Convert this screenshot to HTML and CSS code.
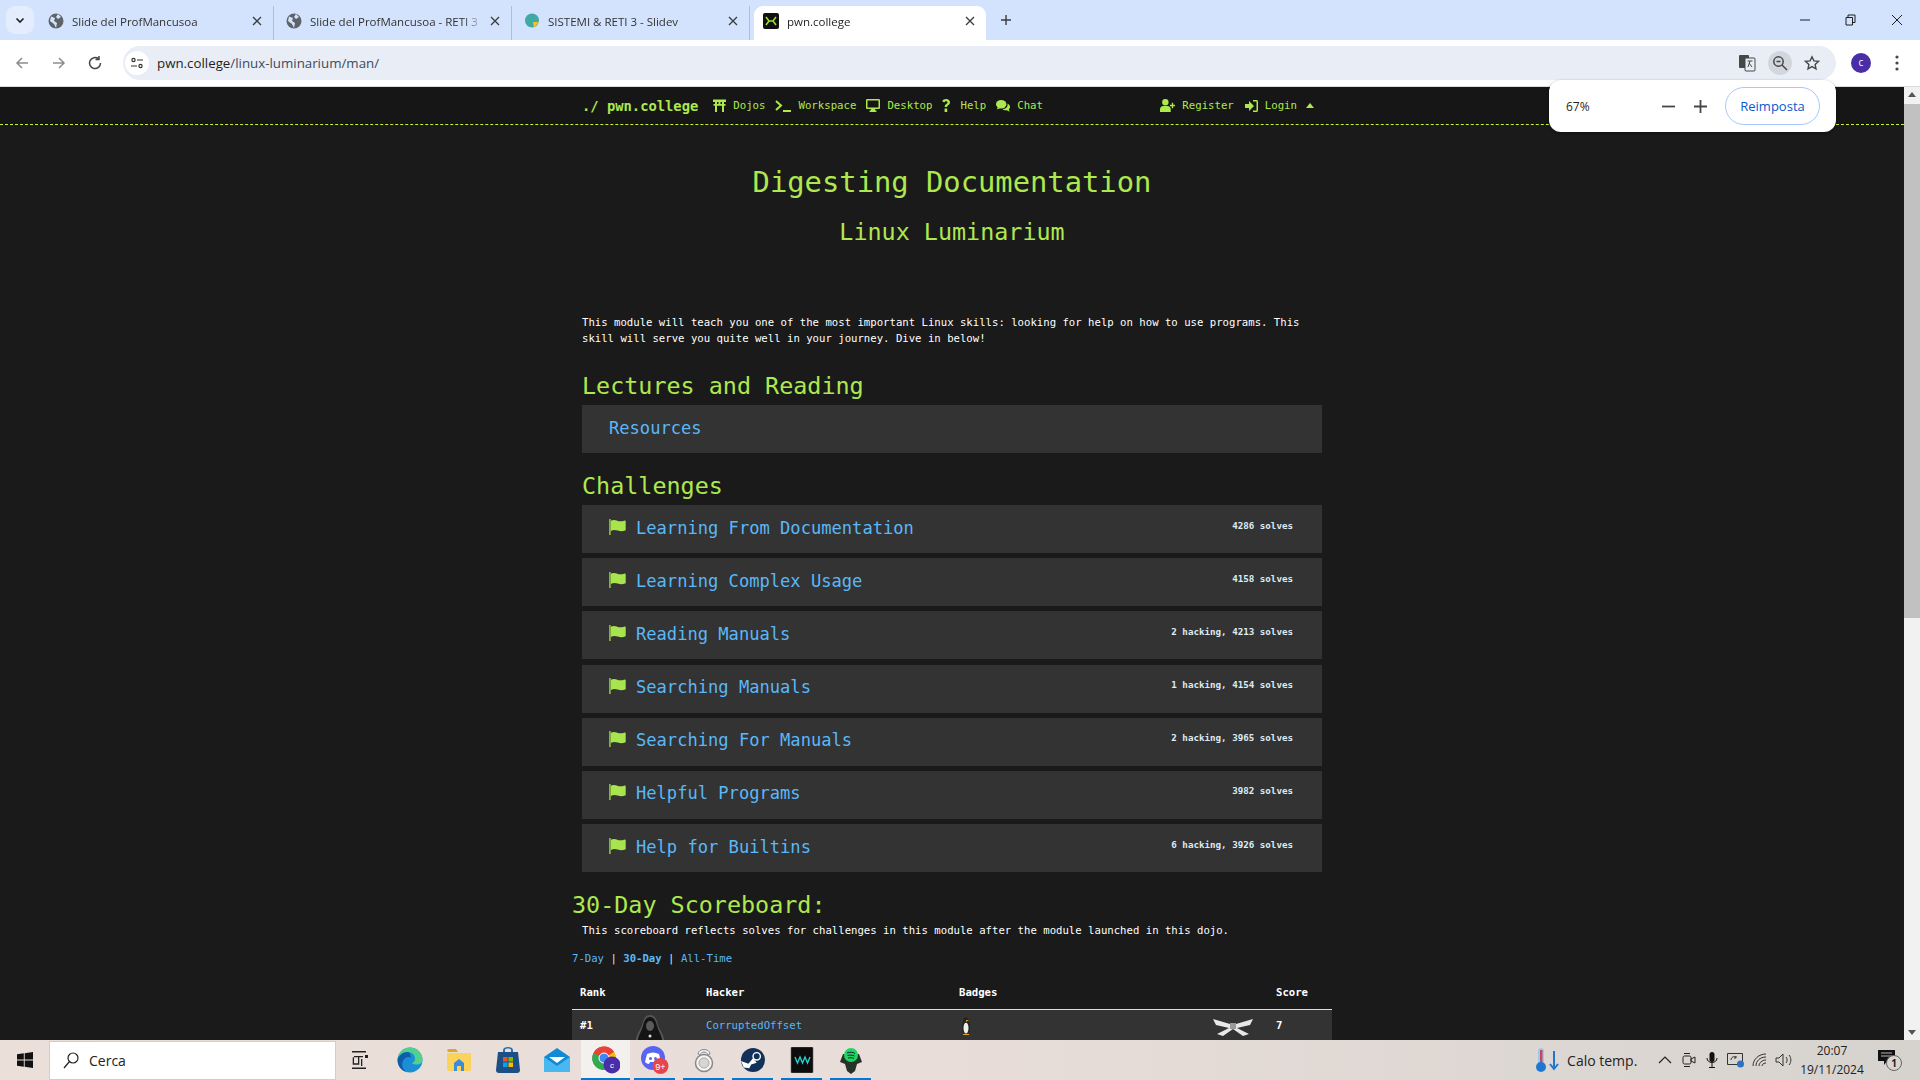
FILE: index.html
```html
<!DOCTYPE html>
<html lang="en">
<head>
    <meta charset="UTF-8">
    <title>pwn.college</title>
    <link rel="stylesheet" href="styles.css">
</head>
<body>
    <svg class="defs" width="0" height="0">
        <symbol id="flag" viewBox="0 0 17 16"><path d="M0 0h1.800v16H0z" fill="#7fb33a"/><path d="M1.800 1.800c2.500-1.400 4.500-.8 6.500 0s4.500.8 7.400-.3c.6 0 1 .2 1 .7v9c-3 1.600-5.500 1.300-8 .4s-4.500-.8-6.900.4z" fill="#a8e44d"/></symbol>
        <symbol id="globe" viewBox="0 0 16 16"><circle cx="8" cy="8" r="7.500" fill="#5f6368"/><path d="M3 3.500 7 5 6 8l3 2-1 5-2-4-4-3zM10 1l3 3-3 2-2-2z" fill="#d3e3fd"/></symbol>
        <symbol id="tabx" viewBox="0 0 10 10"><path d="M1 1l8 8M9 1 1 9" stroke="#3c3c3c" stroke-width="1.300"/></symbol>
    </svg>

    <!-- browser tabs -->
    <div class="tabstrip">
        <div class="tab-search"><svg width="10" height="10" viewBox="0 0 10 10"><path d="M1.500 3.500 5 7l3.500-3.500" fill="none" stroke="#1f1f1f" stroke-width="1.600"/></svg></div>
        <div class="tab">
            <svg class="favicon" width="16" height="16"><use href="#globe"/></svg>
            <span class="tab-title">Slide del ProfMancusoa</span>
            <svg class="tab-x" width="10" height="10"><use href="#tabx"/></svg>
        </div>
        <div class="tab">
            <svg class="favicon" width="16" height="16"><use href="#globe"/></svg>
            <span class="tab-title">Slide del ProfMancusoa - RETI 3</span>
            <svg class="tab-x" width="10" height="10"><use href="#tabx"/></svg>
        </div>
        <div class="tab">
            <svg class="favicon" width="16" height="16" viewBox="0 0 16 16"><circle cx="8" cy="7.500" r="7" fill="#3fa9a4"/><path d="M9 9h6l-5 6z" fill="#f2c230"/></svg>
            <span class="tab-title">SISTEMI &amp; RETI 3 - Slidev</span>
            <svg class="tab-x" width="10" height="10"><use href="#tabx"/></svg>
        </div>
        <div class="tab active">
            <svg class="favicon" width="16" height="16" viewBox="0 0 16 16"><rect width="16" height="16" rx="2" fill="#111"/><path d="M3 4l3 4-3 4M13 4l-3 4 3 4M6 8h4" fill="none" stroke="#a6e22e" stroke-width="1.500"/></svg>
            <span class="tab-title">pwn.college</span>
            <svg class="tab-x" width="10" height="10"><use href="#tabx"/></svg>
        </div>
        <svg class="tab-new" width="12" height="12" viewBox="0 0 12 12"><path d="M6 1v10M1 6h10" stroke="#3c3c3c" stroke-width="1.400"/></svg>
        <div class="win-controls">
            <svg width="10" height="10" viewBox="0 0 10 10"><path d="M0 5h10" stroke="#1f1f1f"/></svg>
            <svg width="11" height="12" viewBox="0 0 11 12"><path d="M1 3.500h6.500V11H1zM3 3.500V1h7v7.500H7.500" fill="none" stroke="#1f1f1f"/></svg>
            <svg width="12" height="12" viewBox="0 0 12 12"><path d="M1 1l10 10M11 1 1 11" stroke="#1f1f1f"/></svg>
        </div>
    </div>

    <!-- address bar -->
    <div class="toolbar">
        <svg class="tool-btn" width="16" height="16" viewBox="0 0 16 16"><path d="M14 8H3M8 3 3 8l5 5" fill="none" stroke="#8a8d91" stroke-width="1.500"/></svg>
        <svg class="tool-btn" width="16" height="16" viewBox="0 0 16 16"><path d="M2 8h11M8 3l5 5-5 5" fill="none" stroke="#8a8d91" stroke-width="1.500"/></svg>
        <svg class="tool-btn" width="16" height="16" viewBox="0 0 16 16"><path d="M13.500 8A5.500 5.500 0 1 1 11.500 3.800M12 1v3.500H8.500" fill="none" stroke="#474747" stroke-width="1.500"/></svg>
        <div class="omnibox">
            <div class="site-info"><svg width="14" height="14" viewBox="0 0 14 14"><g fill="none" stroke="#333" stroke-width="1.200"><circle cx="3.500" cy="4" r="1.600"/><path d="M7 4h6M1 10h6"/><circle cx="10.500" cy="10" r="1.600"/></g></svg></div>
            <div class="url">pwn.college<span class="url-path">/linux-luminarium/man/</span></div>
            <div class="omni-icons">
                <svg width="18" height="18" viewBox="0 0 18 18"><rect x="1" y="1" width="10" height="13" rx="1" fill="#474747"/><rect x="7" y="4" width="10" height="13" rx="1" fill="#e9eef6" stroke="#474747"/><path d="M9.500 7h5M12 7l-2 6M11 9l3 4" stroke="#474747" fill="none"/></svg>
                <span class="zoom-chip"><svg width="16" height="16" viewBox="0 0 16 16"><circle cx="6.500" cy="6.500" r="4.700" fill="none" stroke="#474747" stroke-width="1.500"/><path d="M10 10l5 5M4.500 6.500h4" stroke="#474747" stroke-width="1.500"/></svg></span>
                <svg width="16" height="16" viewBox="0 0 16 16"><path d="m8 1.800 1.900 4.100 4.500.5-3.300 3 .9 4.400L8 11.600l-4 2.200.9-4.400-3.300-3 4.500-.5z" fill="none" stroke="#474747" stroke-width="1.400"/></svg>
            </div>
        </div>
        <div class="avatar">c</div>
        <svg class="kebab" width="4" height="16" viewBox="0 0 4 16"><circle cx="2" cy="2" r="1.600" fill="#474747"/><circle cx="2" cy="8" r="1.600" fill="#474747"/><circle cx="2" cy="14" r="1.600" fill="#474747"/></svg>
    </div>

    <div class="viewport">
        <div class="page">
            <nav class="navbar">
                <div class="nav-inner">
                    <a class="brand">./ pwn.college</a>
                    <a class="nav-link"><svg width="13" height="13" viewBox="0 0 13 13"><path d="M0 .5h13v2.500H11V5h1.500v1.800H11V13H9V6.800H4V13H2V6.800H.5V5H2V3H0zM4 3v2h1.500V3zm3.500 0v2H9V3z" fill="currentColor"/></svg>Dojos</a>
                    <a class="nav-link"><svg width="16" height="12" viewBox="0 0 16 12"><path d="M1 1l5 4.500L1 10M8 11h8" fill="none" stroke="currentColor" stroke-width="2"/></svg>Workspace</a>
                    <a class="nav-link"><svg width="14" height="13" viewBox="0 0 14 13"><path d="M1.300 0h11.400C13.400 0 14 .6 14 1.300v7.400c0 .7-.6 1.300-1.300 1.300H9l.4 1.500h1V13H3.600v-1.500h1L5 10H1.300C.6 10 0 9.400 0 8.700V1.300C0 .6.600 0 1.300 0zm.2 1.500v7h11v-7z" fill="currentColor"/></svg>Desktop</a>
                    <a class="nav-link"><svg width="11" height="13" viewBox="0 0 11 13"><path d="M4.200 0C6.400 0 8 1.300 8 3.300c0 1.700-1 2.400-2 3.100-.7.500-.9.800-.9 1.600H2.700c0-1.600.5-2.300 1.600-3.100.8-.5 1.200-.9 1.200-1.500 0-.8-.6-1.200-1.400-1.200-.9 0-1.400.5-1.800 1.200L.2 2.200C.9.800 2.300 0 4.200 0zM2.600 9.500h2.600V13H2.600z" fill="currentColor"/></svg>Help</a>
                    <a class="nav-link"><svg width="14" height="12" viewBox="0 0 14 12"><ellipse cx="5.200" cy="4.300" rx="5.200" ry="4.200" fill="currentColor"/><path d="M2 7 .8 9.500 4.500 8z" fill="currentColor"/><path d="M11.500 3.500C13 4.300 14 5.500 14 7c0 1-.5 1.800-1.200 2.400l.9 2.300-3-1.500C9 10.500 7.500 10 6.500 9.200c3 0 5.600-2 5-5.700z" fill="currentColor"/></svg>Chat</a>
                    <div class="nav-right">
                        <a class="nav-link nav-register"><svg width="15" height="13" viewBox="0 0 14 12"><circle cx="5" cy="3" r="3" fill="currentColor"/><path d="M0 12V9.500C0 7.800 1.300 6.500 3 6.500h4c1.700 0 3 1.300 3 3V12zM11 3.500v1.800H9.200v1.400H11v1.800h1.300V6.700H14V5.300h-1.700V3.500z" fill="currentColor"/></svg>Register</a>
                        <a class="nav-link"><svg width="13" height="12" viewBox="0 0 13 12"><path d="M0 4h4V1l5 5-5 5V8H0zM8 0h3.500C12.300 0 13 .7 13 1.500v9c0 .8-.7 1.500-1.500 1.500H8v-1.500h3.500v-9H8z" fill="currentColor"/></svg>Login</a>
                        <svg class="caret" width="8" height="5" viewBox="0 0 8 5"><path d="M0 5 4 0l4 5z" fill="currentColor"/></svg>
                    </div>
                </div>
            </nav>

            <main class="content">
                <h1 class="page-title">Digesting Documentation</h1>
                <h2 class="page-sub">Linux Luminarium</h2>
                <p class="intro">This module will teach you one of the most important Linux skills: looking for help on how to use programs. This skill will serve you quite well in your journey. Dive in below!</p>

                <h3 class="section">Lectures and Reading</h3>
                <div class="row"><a class="row-title">Resources</a></div>

                <h3 class="section section-gap">Challenges</h3>
                <div class="row-list">
                    <div class="row">
                        <svg class="flag" width="17" height="16"><use href="#flag"/></svg>
                        <a class="row-title">Learning From Documentation</a><span class="solves">4286 solves</span>
                    </div>
                    <div class="row">
                        <svg class="flag" width="17" height="16"><use href="#flag"/></svg>
                        <a class="row-title">Learning Complex Usage</a><span class="solves">4158 solves</span>
                    </div>
                    <div class="row">
                        <svg class="flag" width="17" height="16"><use href="#flag"/></svg>
                        <a class="row-title">Reading Manuals</a><span class="solves">2 hacking, 4213 solves</span>
                    </div>
                    <div class="row">
                        <svg class="flag" width="17" height="16"><use href="#flag"/></svg>
                        <a class="row-title">Searching Manuals</a><span class="solves">1 hacking, 4154 solves</span>
                    </div>
                    <div class="row">
                        <svg class="flag" width="17" height="16"><use href="#flag"/></svg>
                        <a class="row-title">Searching For Manuals</a><span class="solves">2 hacking, 3965 solves</span>
                    </div>
                    <div class="row">
                        <svg class="flag" width="17" height="16"><use href="#flag"/></svg>
                        <a class="row-title">Helpful Programs</a><span class="solves">3982 solves</span>
                    </div>
                    <div class="row">
                        <svg class="flag" width="17" height="16"><use href="#flag"/></svg>
                        <a class="row-title">Help for Builtins</a><span class="solves">6 hacking, 3926 solves</span>
                    </div>
                </div>

                <div class="scoreboard">
                    <h3 class="section board-title">30-Day Scoreboard:</h3>
                    <p class="board-note">This scoreboard reflects solves for challenges in this module after the module launched in this dojo.</p>
                    <div class="board-tabs"><a>7-Day</a> | <a class="current">30-Day</a> | <a>All-Time</a></div>
                    <div class="board-row board-head">
                        <span>Rank</span><span></span><span>Hacker</span><span>Badges</span><span></span><span>Score</span>
                    </div>
                    <div class="board-row board-entry">
                        <span>#1</span>
                        <svg class="board-avatar" width="30" height="32" viewBox="0 0 30 30"><path d="M15 1c5 0 7 5 8 10 1 4 5 8 6 14v5H1v-5c1-6 5-10 6-14 1-5 3-10 8-10z" fill="#555"/><path d="M15 3c4 0 6 4 7 9 1 4 4 8 5 13v5H3v-5c1-5 4-9 5-13 1-5 3-9 7-9z" fill="#141414"/><ellipse cx="15" cy="12" rx="4" ry="5" fill="#5a5a5a"/><circle cx="15" cy="22" r="1.500" fill="#ddd"/></svg>
                        <a class="hacker">CorruptedOffset</a>
                        <svg class="penguin" width="10" height="18" viewBox="0 0 10 18"><ellipse cx="5" cy="10" rx="4" ry="7" fill="#222"/><ellipse cx="5" cy="11" rx="2.500" ry="5.500" fill="#eee"/><circle cx="5" cy="3" r="2.500" fill="#222"/><path d="M5 3h3L5 5zM2 17h6v1H2z" fill="#e8a020"/></svg>
                        <svg class="belt" width="42" height="20" viewBox="0 0 42 20"><path d="M1 3 18 8 24 8 41 3 38 9 25 12 37 18 31 20 21 13 11 20 5 18 17 12 4 9z" fill="#e8e8e8"/><path d="M18 7h6v6h-6z" fill="#999"/></svg>
                        <span>7</span>
                    </div>
                </div>
            </main>
        </div>

        <div class="scrollbar">
            <svg width="8" height="5" viewBox="0 0 8 5"><path d="M0 5 4 0l4 5z" fill="#555"/></svg>
            <div class="scroll-thumb"></div>
            <svg class="scroll-down" width="8" height="5" viewBox="0 0 8 5"><path d="M0 0h8L4 5z" fill="#555"/></svg>
        </div>

        <!-- chrome zoom bubble -->
        <div class="zoom-bubble">
            <span class="zoom-level">67%</span>
            <svg class="zoom-minus" width="13" height="13" viewBox="0 0 13 13"><path d="M0 6.500h13" stroke="#474747" stroke-width="1.800"/></svg>
            <svg class="zoom-plus" width="13" height="13" viewBox="0 0 13 13"><path d="M0 6.500h13M6.500 0v13" stroke="#474747" stroke-width="1.800"/></svg>
            <button class="zoom-reset">Reimposta</button>
        </div>
    </div>

    <!-- windows taskbar -->
    <div class="taskbar">
        <div class="start"><svg width="16" height="16" viewBox="0 0 16 16"><path d="M0 2.300 6.800 1.300v6.200H0zM7.700 1.200 16 0v7.500H7.700zM0 8.400h6.800v6.300L0 13.700zM7.700 8.400H16V16l-8.300-1.200z" fill="#111"/></svg></div>
        <div class="search"><svg width="18" height="18" viewBox="0 0 18 18"><circle cx="11" cy="7" r="5" fill="none" stroke="#222" stroke-width="1.200"/><path d="M7.500 10.500 2 17" stroke="#222" stroke-width="1.200"/></svg><span>Cerca</span></div>
        <div class="task-icons">
            <div class="task task-view"><svg width="18" height="18" viewBox="0 0 18 18"><path d="M2 0h14v1.500H2zM15 4h3v3h-3zM4 5h9v1.300H4v6H8v-6h1.300v7.500H2.700V6.300H4zM11 8h1.300v7H11zM2 16.500h14V18H2z" fill="#222"/></svg></div>
            <div class="task"><svg width="26" height="26" viewBox="0 0 26 26"><circle cx="13" cy="13" r="12.500" fill="#1b8ed6"/><path d="M13 .5C20 .5 25.500 6 25.500 13c0 3-2.500 4.500-6 4.500-2 0-3.500-.5-4.500-1.500 2-1 3-2.500 3-4.500C18 8 15 5 11 5 6 5 2 8 .6 11.500 2 5 7 .5 13 .5z" fill="#52d18e"/><path d="M11 5C6 5 1.500 8.500.6 13c0 6 4 11 9.500 12.200C6 23 4.500 19 5.500 15c.8-3 3.300-5 6-5 1 0 2 .3 2.500 .7C13.500 7.500 12.500 5.500 11 5z" fill="#0f5da8"/></svg></div>
            <div class="task"><svg width="24" height="22" viewBox="0 0 24 22"><path d="M0 2c0-1 1-2 2-2h7l2 3H2z" fill="#e0a526"/><path d="M0 4h24v16c0 1-1 2-2 2H2c-1 0-2-1-2-2z" fill="#fbd25a"/><path d="M7 22v-8l5-4 5 4v8z" fill="#3a8dde"/><path d="M10 22v-5h4v5z" fill="#fbd25a"/></svg></div>
            <div class="task"><svg width="24" height="26" viewBox="0 0 24 26"><path d="M7 6V3c0-4 10-4 10 0v3h-2V3c0-2-6-2-6 0v3z" fill="#2a6fb0"/><path d="M2 5h20l2 18c0 2-1 3-3 3H3c-2 0-3-1-3-3z" fill="#1d4f87"/><path d="M7 10h4.500v4.500H7z" fill="#f25022"/><path d="M12.500 10H17v4.500h-4.500z" fill="#7fba00"/><path d="M7 15.500h4.500V20H7z" fill="#00a4ef"/><path d="M12.500 15.500H17V20h-4.500z" fill="#ffb900"/></svg></div>
            <div class="task"><svg width="26" height="24" viewBox="0 0 26 24"><path d="M13 0 26 9v15H0V9z" fill="#0f8ad6"/><path d="M0 9l13 9 13-9v15H0z" fill="#49b7f0"/><path d="M5 9h16l-8 6z" fill="#fff"/></svg></div>
            <div class="task current">
                <svg width="28" height="28" viewBox="0 0 28 28"><circle cx="12" cy="12" r="11.500" fill="#ea4335"/><path d="M12 12 22 6a11.500 11.500 0 0 1-4 16z" fill="#fbbc04"/><path d="M12 12l6 10A11.500 11.500 0 0 1 1.500 7z" fill="#34a853"/><path d="M12 .5A11.500 11.500 0 0 1 22 6H12a6 6 0 0 0-5.200 3L1.500 7A11.500 11.500 0 0 1 12 .5z" fill="#ea4335"/><circle cx="12" cy="12" r="5" fill="#4285f4" stroke="#fff"/><circle cx="20" cy="19" r="8.500" fill="#4a2ea8"/><text x="20" y="22" font-size="8" fill="#fff" text-anchor="middle" font-family="Liberation Sans">c</text></svg>
            </div>
            <div class="task running"><svg width="28" height="28" viewBox="0 0 28 28"><circle cx="12" cy="12" r="12" fill="#5865f2"/><path d="M6 8c4-2 8-2 12 0l2 8c-1 1-3 2-4 2l-1-2H9l-1 2c-1 0-3-1-4-2z" fill="#fff"/><circle cx="9.500" cy="12.500" r="1.500" fill="#5865f2"/><circle cx="14.500" cy="12.500" r="1.500" fill="#5865f2"/><circle cx="19.500" cy="20" r="8" fill="#e8444a"/><text x="19.500" y="23.500" font-size="9" fill="#fff" text-anchor="middle" font-family="Liberation Sans">9+</text></svg></div>
            <div class="task running"><svg width="20" height="26" viewBox="0 0 20 26"><circle cx="10" cy="16" r="8.500" fill="#f3f3f3" stroke="#888" stroke-width="1.500"/><circle cx="10" cy="16" r="5" fill="#d9d5d0" stroke="#aaa"/><path d="M4 7C4 1 16 1 16 7l-2 1C13 4 7 4 6 8z" fill="#f3f3f3" stroke="#888"/></svg></div>
            <div class="task running"><svg width="24" height="26" viewBox="0 0 26 26"><circle cx="13" cy="13" r="13" fill="#12325a"/><circle cx="17" cy="9" r="4" fill="none" stroke="#fff" stroke-width="1.500"/><path d="M0 14l8 3 5-6 4 5-6 2-2 4-6-1z" fill="#fff"/></svg></div>
            <div class="task running"><svg width="24" height="26" viewBox="0 0 24 26"><rect x="1" y="0" width="22" height="26" rx="1" fill="#0c0c0c" stroke="#666" stroke-width=".6"/><path d="M5 10l2.500 6L10 10l2.500 6L15 10l2.500 6L20 10" fill="none" stroke="#27d0d0" stroke-width="1.400"/></svg></div>
            <div class="task running"><svg width="22" height="28" viewBox="0 0 22 28"><path d="M3 8h16l3 8-5 2-2 7-4 3-4-3-2-7-5-2z" fill="#26332b"/><circle cx="11" cy="9" r="7" fill="#1ed760"/><path d="M7 7c3-1 6-1 8 .5M7.500 9.500c2.500-.7 5-.5 7 .5M8 12c2-.5 4-.4 6 .5" fill="none" stroke="#123" stroke-width="1"/></svg></div>
        </div>
        <div class="tray">
            <svg class="temp" width="26" height="26" viewBox="0 0 26 26"><rect x="3" y="1" width="6" height="18" rx="3" fill="#9cc7ee"/><rect x="5" y="3" width="2.500" height="14" fill="#c24a60"/><circle cx="6" cy="20" r="5" fill="#1e78d2"/><path d="M19 4v17M15 17l4 5 4-5" fill="none" stroke="#1e78d2" stroke-width="2"/></svg>
            <span class="weather">Calo temp.</span>
            <span class="tray-icon"><svg width="14" height="8" viewBox="0 0 14 8"><path d="M1 7l6-6 6 6" fill="none" stroke="#222" stroke-width="1.200"/></svg></span>
            <span class="tray-icon"><svg width="14" height="16" viewBox="0 0 14 16"><rect x="1" y="4" width="8" height="8" rx="1.500" fill="none" stroke="#222"/><path d="M9 7l4-2v6l-4-2zM2 1.500h6M2 14.500h6" fill="none" stroke="#222"/></svg></span>
            <span class="tray-icon"><svg width="12" height="16" viewBox="0 0 12 16"><rect x="3.500" y="0" width="5" height="10" rx="2.500" fill="#111"/><path d="M1 6c0 6 10 6 10 0M6 11v4M3 15.500h6" fill="none" stroke="#111"/></svg></span>
            <span class="tray-icon"><svg width="18" height="16" viewBox="0 0 18 16"><path d="M.5 1.500h15v11H.5z" fill="none" stroke="#333"/><path d="M4 8c0-3 3-4 5-3M9 4v2H7" fill="none" stroke="#333"/><circle cx="13.500" cy="12" r="3.500" fill="#2a72c8"/></svg></span>
            <span class="tray-icon"><svg width="16" height="14" viewBox="0 0 16 14"><path d="M1 13C1 6 7 1 14 1M4 13C4 8 8 4 14 4M7 13c0-3 3-6 7-6M10 13c0-1 1-3 4-3" fill="none" stroke="#333"/></svg></span>
            <span class="tray-icon"><svg width="17" height="14" viewBox="0 0 17 14"><path d="M1 5h3l4-4v12L4 9H1zM11 4c1.500 2 1.500 4 0 6M14 2c2.500 3 2.500 7 0 10" fill="none" stroke="#333"/></svg></span>
            <div class="clock"><span>20:07</span><span>19/11/2024</span></div>
            <div class="notify"><svg width="17" height="15" viewBox="0 0 17 15"><path d="M0 0h17v11H9l-3 4v-4H0z" fill="#111"/><path d="M3 3h11M3 6h11" stroke="#ddd" stroke-width=".8"/></svg><span class="notify-count">1</span></div>
        </div>
    </div>
</body>
</html>
```

FILE: styles.css
```css
* {
    box-sizing: border-box;
}

html, body {
    height: 100%;
}

body {
    margin: 0;
    display: flex;
    flex-direction: column;
    overflow: hidden;
    font-family: "Open Sans", "Noto Sans", sans-serif;
    background-color: #1a1a1a;
}

.defs {
    position: absolute;
}

/* browser tabs */
.tabstrip {
    height: 40px;
    flex: none;
    display: flex;
    align-items: flex-end;
    background-color: #d3e3fd;
    padding-left: 6px;
}

.tab-search {
    width: 28px;
    height: 28px;
    margin: 0 2px 6px 0;
    background-color: #e3edfd;
    border-radius: 9px;
    display: flex;
    align-items: center;
    justify-content: center;
}

.tab {
    width: 238px;
    height: 34px;
    flex: none;
    padding: 0 11px 4px 10px;
    display: flex;
    align-items: center;
    font-size: 11.500px;
    color: #333;
    border-right: 1px solid #a9bfdc;
}

.tab.active {
    width: 232px;
    margin-left: 4px;
    padding: 0 11px 4px 7px;
    background-color: #fff;
    border-right: 0;
    border-radius: 9px 9px 0 0;
    color: #1f1f1f;
}

.favicon {
    margin: 0 8px 0 2px;
    flex: none;
}

.tab-title {
    flex: 1;
    overflow: hidden;
    white-space: nowrap;
    -webkit-mask-image: linear-gradient(to right, #000 88%, transparent);
    mask-image: linear-gradient(to right, #000 88%, transparent);
}

.tab-x {
    flex: none;
    margin-left: 6px;
}

.tab-new {
    margin: 0 0 14px 14px;
}

.win-controls {
    margin-left: auto;
    width: 120px;
    height: 100%;
    padding: 0 17px 0 0;
    display: flex;
    justify-content: space-between;
    align-items: center;
}

/* address bar */
.toolbar {
    height: 47px;
    flex: none;
    display: flex;
    align-items: center;
    padding: 0 14px 0 14px;
    background-color: #fff;
    border-bottom: 1px solid #dadce0;
}

.tool-btn {
    margin-right: 21px;
    flex: none;
}

.tool-btn:nth-child(3) {
    margin-left: -1px;
}

.omnibox {
    margin-left: -1px;
    width: 1713px;
    height: 34px;
    flex: none;
    display: flex;
    align-items: center;
    padding: 0 16px 0 2px;
    background-color: #e9eef6;
    border-radius: 17px;
}

.site-info {
    width: 24px;
    height: 24px;
    border-radius: 50%;
    background-color: #fff;
    display: flex;
    align-items: center;
    justify-content: center;
}

.url {
    margin-left: 8px;
    font-size: 13.300px;
    color: #1f1f1f;
}

.url-path {
    color: #3d4a5c;
}

.omni-icons {
    margin-left: auto;
    display: flex;
    align-items: center;
    gap: 12px;
}

.zoom-chip {
    width: 24px;
    height: 24px;
    border-radius: 50%;
    background-color: #d3d6dc;
    display: flex;
    align-items: center;
    justify-content: center;
}

.avatar {
    margin-left: 15px;
    width: 20px;
    height: 20px;
    flex: none;
    border-radius: 50%;
    background-color: #4a2ea8;
    color: #fff;
    font-size: 10px;
    text-align: center;
    line-height: 19px;
}

.kebab {
    margin-left: 24px;
    flex: none;
}

/* page area */
.viewport {
    position: relative;
    flex: 1;
    min-height: 0;
    display: flex;
}

.page {
    flex: 1;
    min-width: 0;
    overflow: hidden;
    background-color: #1a1a1a;
    font-family: "DejaVu Sans Mono", monospace;
}

.navbar {
    height: 38px;
    background-color: #161616;
    border-bottom: 1px dashed #c6f03c;
}

.nav-inner {
    width: 740px;
    height: 100%;
    margin: 0 auto;
    display: flex;
    align-items: center;
    color: #aee84f;
    font-size: 10.700px;
}

.brand {
    margin-right: 15px;
    font-size: 13.800px;
    font-weight: bold;
}

.nav-link {
    display: flex;
    align-items: center;
    gap: 7px;
    margin-right: 10px;
}

.nav-register {
    margin-right: 11px;
}

.nav-right {
    margin-left: auto;
    padding-right: 8px;
    display: flex;
    align-items: center;
}

.caret {
    margin-left: -1px;
}

.content {
    width: 740px;
    margin: 0 auto;
}

.page-title {
    margin: 0;
    padding-top: 38px;
    font-size: 28.800px;
    line-height: 38px;
    font-weight: normal;
    text-align: center;
    color: #aee84f;
}

.page-sub {
    margin: 18px 0 0;
    font-size: 23.400px;
    line-height: 26px;
    font-weight: normal;
    text-align: center;
    color: #aee84f;
}

.intro {
    margin: 70px 0 0;
    font-size: 10.650px;
    line-height: 16px;
    color: #fff;
}

.section {
    margin: 25px 0 0;
    font-size: 23.400px;
    line-height: 28px;
    font-weight: normal;
    color: #aee84f;
}

.section-gap {
    margin-top: 19px;
}

.row-list {
    margin-top: 5px;
    display: flex;
    flex-direction: column;
    gap: 5.200px;
}

.row {
    margin-top: 5px;
    height: 48px;
    padding: 0 29px 3px 27px;
    display: flex;
    align-items: center;
    background-color: #333;
}

.row-list .row {
    margin-top: 0;
}

.flag {
    margin-right: 10px;
    margin-top: -2px;
    flex: none;
}

.row-title {
    font-size: 17.100px;
    color: #5ab8f8;
}

.solves {
    margin-left: auto;
    margin-top: -5px;
    font-size: 9.200px;
    font-weight: bold;
    color: #dcebf5;
}

.scoreboard {
    margin: 19px -10px 0;
}

.board-title {
    margin: 0;
}

.board-note {
    margin: 4px 0 0 10px;
    font-size: 10.650px;
    line-height: 16px;
    color: #fff;
}

.board-tabs {
    margin-top: 12px;
    font-size: 10.650px;
    line-height: 16px;
    color: #d8e8f5;
}

.board-tabs a {
    color: #5ab8f8;
}

.board-tabs .current {
    font-weight: bold;
}

.board-row {
    display: grid;
    grid-template-columns: 55px 71px 253px 253px 64px 1fr;
    align-items: center;
    padding-left: 8px;
    font-size: 10.650px;
    font-weight: bold;
    color: #fff;
}

.board-head {
    height: 34px;
    margin-top: 9px;
    border-bottom: 1px solid #ddd;
}

.board-entry {
    height: 31px;
    grid-template-rows: 31px;
    background-color: #333;
}

.board-avatar {
    align-self: start;
    margin-top: 3px;
}

.penguin {
    margin-left: 2px;
}

.hacker {
    font-weight: normal;
    color: #5ab8f8;
}

.scrollbar {
    width: 16px;
    flex: none;
    display: flex;
    flex-direction: column;
    align-items: center;
    padding-top: 5px;
    background-color: #f1f1f1;
}

.scroll-thumb {
    width: 100%;
    height: 514px;
    margin-top: 7px;
    background-color: #c1c1c1;
}

.scroll-down {
    margin-top: auto;
    margin-bottom: 5px;
}

.zoom-bubble {
    position: absolute;
    top: -7px;
    left: 1549px;
    width: 287px;
    height: 52px;
    padding: 0 16px 0 17px;
    display: flex;
    align-items: center;
    background-color: #fff;
    border-radius: 12px;
    box-shadow: 0 1px 3px rgba(0, 0, 0, .45);
    font-family: "Open Sans", sans-serif;
}

.zoom-level {
    font-size: 12px;
    color: #1f1f1f;
}

.zoom-minus {
    margin-left: 72px;
}

.zoom-plus {
    margin-left: 19px;
}

.zoom-reset {
    margin-left: auto;
    width: 95px;
    height: 38px;
    padding: 0;
    border: 1px solid #a8c7fa;
    border-radius: 19px;
    background-color: #fff;
    color: #0b57d0;
    font-family: inherit;
    font-size: 13px;
}

/* windows taskbar */
.taskbar {
    height: 40px;
    flex: none;
    display: flex;
    align-items: center;
    background: linear-gradient(to right, #eadfd9, #e8ddd8 50%, #d6d3cf);
}

.start {
    width: 49px;
    display: flex;
    justify-content: center;
}

.search {
    width: 287px;
    height: 39px;
    padding-left: 12px;
    display: flex;
    align-items: center;
    gap: 9px;
    background-color: #fff;
    border: 1px solid #d0cdca;
    font-size: 14px;
    color: #222;
}

.task-icons {
    display: flex;
    height: 100%;
}

.task {
    width: 49px;
    height: 100%;
    display: flex;
    align-items: center;
    justify-content: center;
}

.task-view {
    padding-right: 3px;
}

.task.running {
    width: 41px;
    margin: 0 4px;
    box-shadow: inset 0 -2px 0 #0078d4;
}

.task.current {
    background-color: #f4f0ee;
    box-shadow: inset 0 -2px 0 #0078d4;
}

.tray {
    margin-left: auto;
    padding-right: 14px;
    height: 100%;
    display: flex;
    align-items: center;
    color: #222;
}

.temp {
    margin-right: 6px;
}

.weather {
    width: 86px;
    font-size: 14px;
    white-space: nowrap;
}

.tray-icon {
    width: 23.670px;
    display: flex;
    align-items: center;
    justify-content: center;
}

.clock {
    width: 74px;
    display: flex;
    flex-direction: column;
    align-items: center;
    font-size: 12px;
    line-height: 19px;
}

.notify {
    position: relative;
    width: 37px;
    height: 24px;
    padding-left: 9px;
}

.notify-count {
    position: absolute;
    top: 7px;
    left: 17px;
    width: 16px;
    height: 16px;
    border: 1px solid #666;
    border-radius: 50%;
    background-color: #d9d5d0;
    font-size: 10px;
    font-weight: bold;
    line-height: 14px;
    text-align: center;
}
```
